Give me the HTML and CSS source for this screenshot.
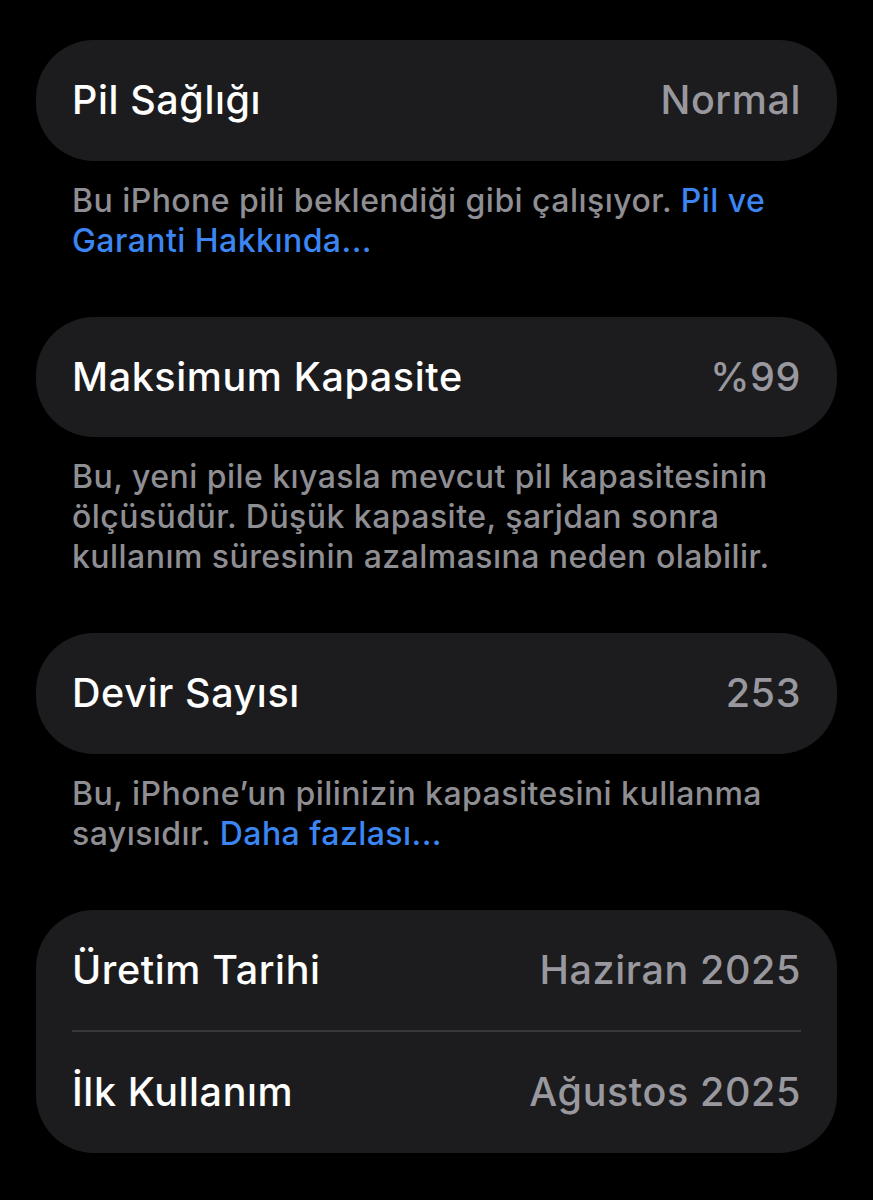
FILE: index.html
```html
<!DOCTYPE html>
<html lang="tr">
<head>
<meta charset="utf-8">
<title>Pil Sağlığı</title>
<link rel="stylesheet" href="styles.css">
</head>
<body>
<main class="page">
  <section class="group">
    <div class="card">
      <div class="row"><span class="label">Pil Sağlığı</span><span class="value">Normal</span></div>
    </div>
    <p class="footer">Bu iPhone pili beklendiği gibi çalışıyor. <a class="link" href="#">Pil ve Garanti Hakkında...</a></p>
  </section>
  <section class="group">
    <div class="card">
      <div class="row"><span class="label">Maksimum Kapasite</span><span class="value">%99</span></div>
    </div>
    <p class="footer">Bu, yeni pile kıyasla mevcut pil kapasitesinin ölçüsüdür. Düşük kapasite, şarjdan sonra kullanım süresinin azalmasına neden olabilir.</p>
  </section>
  <section class="group">
    <div class="card">
      <div class="row"><span class="label">Devir Sayısı</span><span class="value">253</span></div>
    </div>
    <p class="footer">Bu, iPhone’un pilinizin kapasitesini kullanma sayısıdır. <a class="link" href="#">Daha fazlası...</a></p>
  </section>
  <section class="group">
    <div class="card">
      <div class="row"><span class="label">Üretim Tarihi</span><span class="value">Haziran 2025</span></div>
      <div class="sep"></div>
      <div class="row"><span class="label">İlk Kullanım</span><span class="value">Ağustos 2025</span></div>
    </div>
  </section>
</main>
</body>
</html>
```
FILE: styles.css
```css
html, body {
  margin: 0;
  padding: 0;
  background: #000;
}
body {
  font-family: Inter, "Noto Sans", "Liberation Sans", sans-serif;
  -webkit-font-smoothing: antialiased;
}
.page {
  padding: 40px 36px 0;
  display: flex;
  flex-direction: column;
}
.group {
  display: flex;
  flex-direction: column;
}
.card {
  background: #1c1c1e;
  border-radius: 58px;
  display: flex;
  flex-direction: column;
}
.row {
  height: 120.5px;
  padding: 0 36px;
  display: flex;
  align-items: center;
  justify-content: space-between;
  font-size: 39.5px;
  letter-spacing: 0.6px;
}
.label {
  color: #ffffff;
  font-weight: 500;
}
.value {
  color: #98989e;
  font-weight: 500;
}
.sep {
  height: 2px;
  background: #38383a;
  margin: 0 36px;
}
.footer {
  margin: 0;
  padding: 20px 36px 56px;
  font-size: 32px;
  line-height: 40px;
  color: #8e8e93;
  font-weight: 500;
  letter-spacing: 0.45px;
}
.link {
  color: #3b86f2;
  text-decoration: none;
}
```
